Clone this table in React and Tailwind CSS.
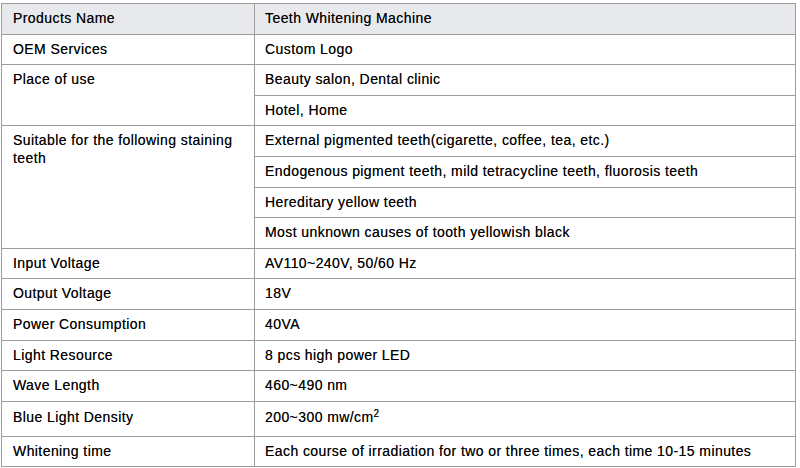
const rows = [
  { label: "Products Name", values: ["Teeth Whitening Machine"], head: true },
  { label: "OEM Services", values: ["Custom Logo"] },
  { label: "Place of use", values: ["Beauty salon, Dental clinic", "Hotel, Home"] },
  {
    label: "Suitable for the following staining teeth",
    values: [
      "External pigmented teeth(cigarette, coffee, tea, etc.)",
      "Endogenous pigment teeth, mild tetracycline teeth, fluorosis teeth",
      "Hereditary yellow teeth",
      "Most unknown causes of tooth yellowish black",
    ],
  },
  { label: "Input Voltage", values: ["AV110~240V, 50/60 Hz"] },
  { label: "Output Voltage", values: ["18V"] },
  { label: "Power Consumption", values: ["40VA"] },
  { label: "Light Resource", values: ["8 pcs high power LED"] },
  { label: "Wave Length", values: ["460~490 nm"] },
  { label: "Blue Light Density", values: ["density"], tall: true },
  { label: "Whitening time", values: ["Each course of irradiation for two or three times, each time 10-15 minutes"] },
];

const cell = "border border-[#9c9c9c] align-top leading-[18px]";

export default function App() {
  return (
    <div className="w-[800px] h-[468px] bg-white pt-[3px] pl-[1px] font-['Liberation_Sans',Arial,sans-serif] text-[14px] tracking-[0.42px] text-black [text-shadow:0_0_0.5px_rgba(0,0,0,0.6)]">
      <table className="w-[795px] border-collapse table-fixed">
        <colgroup>
          <col className="w-[253px]" />
          <col />
        </colgroup>
        <tbody>
          {rows.map((r) =>
            r.values.map((v, i) => (
              <tr
                key={r.label + i}
                className={`${r.head ? "bg-[#e8e9ec]" : ""} ${r.tall ? "h-[35px]" : "h-[30.6px]"}`}
              >
                {i === 0 && (
                  <td rowSpan={r.values.length} className={`${cell} pl-[11px] pr-2 ${r.tall ? "pt-[6px]" : "pt-[5px]"}`}>
                    {r.label}
                  </td>
                )}
                <td className={`${cell} pl-[10px] ${r.tall ? "pt-[6px]" : "pt-[5px]"}`}>
                  {v === "density" ? (
                    <>
                      200~300 mw/cm<sup className="text-[10px] leading-none">2</sup>
                    </>
                  ) : (
                    v
                  )}
                </td>
              </tr>
            ))
          )}
        </tbody>
      </table>
    </div>
  );
}
